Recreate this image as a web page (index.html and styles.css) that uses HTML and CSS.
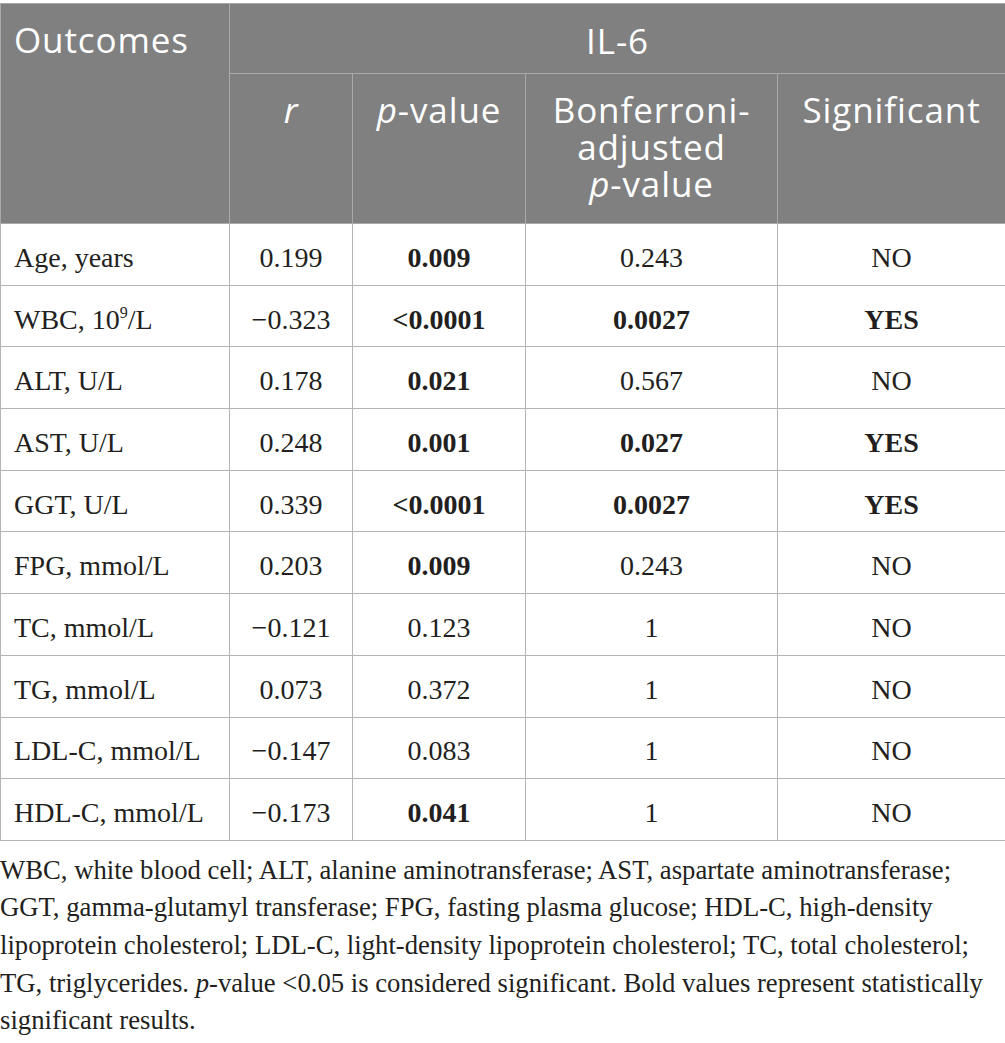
FILE: index.html
```html
<!DOCTYPE html>
<html lang="en">
<head>
<meta charset="utf-8">
<title>IL-6 correlations</title>
<link rel="stylesheet" href="styles.css">
</head>
<body>
<div class="page">
<table class="data">
  <colgroup>
    <col class="c1"><col class="c2"><col class="c3"><col class="c4"><col class="c5">
  </colgroup>
  <thead>
    <tr class="h1">
      <th rowspan="2" class="outcomes">Outcomes</th>
      <th colspan="4" class="group">IL-6</th>
    </tr>
    <tr class="h2">
      <th><i>r</i></th>
      <th><i>p</i>-value</th>
      <th>Bonferroni-<br>adjusted<br><i>p</i>-value</th>
      <th>Significant</th>
    </tr>
  </thead>
  <tbody>
    <tr><td class="lbl">Age, years</td><td>0.199</td><td><b>0.009</b></td><td>0.243</td><td>NO</td></tr>
    <tr><td class="lbl">WBC, 10<sup>9</sup>/L</td><td>&minus;0.323</td><td><b>&lt;0.0001</b></td><td><b>0.0027</b></td><td><b>YES</b></td></tr>
    <tr><td class="lbl">ALT, U/L</td><td>0.178</td><td><b>0.021</b></td><td>0.567</td><td>NO</td></tr>
    <tr><td class="lbl">AST, U/L</td><td>0.248</td><td><b>0.001</b></td><td><b>0.027</b></td><td><b>YES</b></td></tr>
    <tr><td class="lbl">GGT, U/L</td><td>0.339</td><td><b>&lt;0.0001</b></td><td><b>0.0027</b></td><td><b>YES</b></td></tr>
    <tr><td class="lbl">FPG, mmol/L</td><td>0.203</td><td><b>0.009</b></td><td>0.243</td><td>NO</td></tr>
    <tr><td class="lbl">TC, mmol/L</td><td>&minus;0.121</td><td>0.123</td><td>1</td><td>NO</td></tr>
    <tr><td class="lbl">TG, mmol/L</td><td>0.073</td><td>0.372</td><td>1</td><td>NO</td></tr>
    <tr><td class="lbl">LDL-C, mmol/L</td><td>&minus;0.147</td><td>0.083</td><td>1</td><td>NO</td></tr>
    <tr><td class="lbl">HDL-C, mmol/L</td><td>&minus;0.173</td><td><b>0.041</b></td><td>1</td><td>NO</td></tr>
  </tbody>
</table>
<p class="note">WBC, white blood cell; ALT, alanine aminotransferase; AST, aspartate aminotransferase; GGT, gamma-glutamyl transferase; FPG, fasting plasma glucose; HDL-C, high-density lipoprotein cholesterol; LDL-C, light-density lipoprotein cholesterol; TC, total cholesterol; TG, triglycerides. <i>p</i>-value &lt;0.05 is considered significant. Bold values represent statistically significant results.</p>
</div>
</body>
</html>
```

FILE: styles.css
```css
html, body {
  margin: 0;
  padding: 0;
  background: #ffffff;
}

.page {
  width: 1005px;
  padding-top: 3px;
}

.data {
  width: 1005px;
  border-collapse: collapse;
  table-layout: fixed;
  font-family: "Liberation Serif", "Times New Roman", serif;
  font-size: 28px;
  color: #231f20;
}

.c1 { width: 229px; }
.c2 { width: 123px; }
.c3 { width: 173px; }
.c4 { width: 252px; }
.c5 { width: 228px; }

.data th {
  background: #7f807f;
  color: #ffffff;
  font-family: "Open Sans", "Noto Sans", sans-serif;
  font-weight: 400;
  font-size: 35px;
  letter-spacing: 0.9px;
  line-height: 37px;
  border: 1px solid #a9a9a9;
  vertical-align: top;
  text-align: center;
  padding: 0 4px;
}

.data th.outcomes {
  text-align: left;
  padding: 17px 12px 0 13px;
}

.h1 th.group {
  height: 70px;
  padding-top: 18px;
  box-sizing: border-box;
}

.h2 th {
  height: 150px;
  padding-top: 17px;
  box-sizing: border-box;
}

.data td {
  border: 1px solid #b4b4b4;
  text-align: center;
  vertical-align: middle;
  height: 61.7px;
  padding: 7px 10px 0;
  box-sizing: border-box;
  line-height: 30px;
}

.data td.lbl {
  text-align: left;
  padding-left: 13px;
}

.data sup {
  font-size: 16px;
  line-height: 0;
  vertical-align: 11px;
}

.note {
  margin: 11px 0 0;
  font-family: "Liberation Serif", "Times New Roman", serif;
  font-size: 26.7px;
  line-height: 37.6px;
  color: #231f20;
}
```
